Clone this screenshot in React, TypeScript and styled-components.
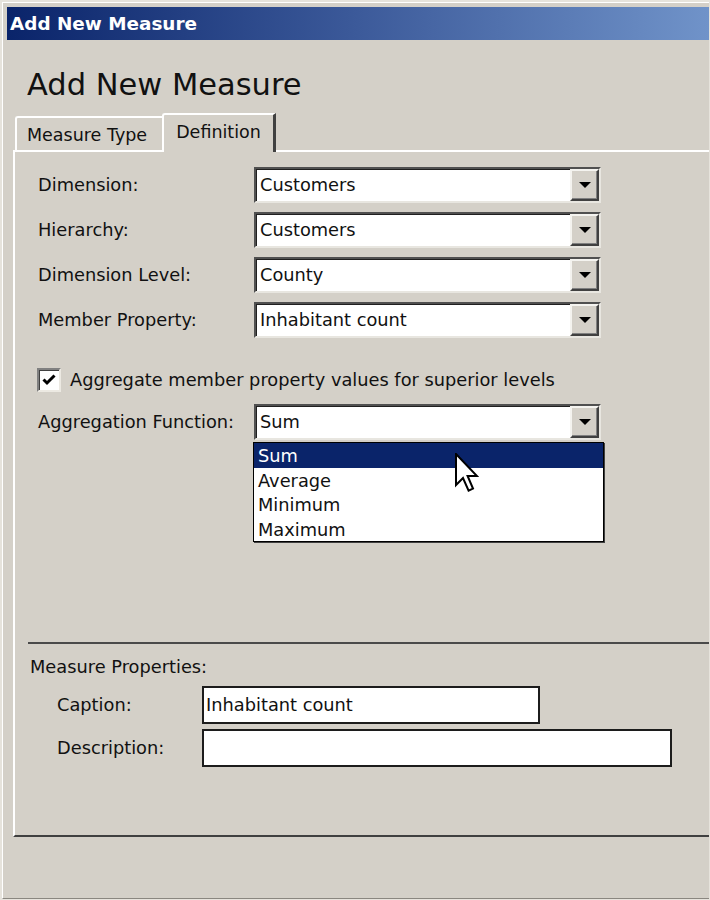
import { Fragment } from 'react';
import styled, { createGlobalStyle } from 'styled-components';

const GlobalStyle = createGlobalStyle`
  html, body {
    margin: 0;
    padding: 0;
    background: #d4d0c8;
  }

  body {
    font-family: 'DejaVu Sans', 'Liberation Sans', sans-serif;
    color: #111;
  }
`;

const Window = styled.div`
  width: 710px;
  height: 900px;
  box-sizing: border-box;
  padding: 2px 1px 0 2px;
  background: #e6e3dc;
`;

const Frame = styled.div`
  height: 897px;
  box-sizing: border-box;
  display: flex;
  flex-direction: column;
  background: #d4d0c8;
  border-top: 1px solid #fff;
  border-left: 1px solid #fff;
  border-bottom: 1px solid #8a8780;
  padding: 4px 0 0 4px;
`;

const TitleBar = styled.div`
  height: 33px;
  display: flex;
  align-items: center;
  padding-left: 3px;
  background: linear-gradient(to right, #0a246a 0%, #3c5a9a 50%, #7093c9 100%);
  color: #fff;
  font-size: 18.4px;
  font-weight: bold;
`;

const Heading = styled.h1`
  margin: 27px 0 0 20px;
  font-size: 30.5px;
  line-height: 36px;
  font-weight: normal;
`;

const TabRow = styled.div`
  display: flex;
  align-items: flex-end;
  margin: 10px 0 0 8px;
  height: 37px;
`;

const Tab = styled.div<{ $active?: boolean }>`
  position: relative;
  box-sizing: border-box;
  height: ${p => (p.$active ? 39 : 34)}px;
  padding: ${p => (p.$active ? '6px 12px 0 12px' : '6px 15px 0 10px')};
  margin-bottom: ${p => (p.$active ? -2 : 0)}px;
  background: #d4d0c8;
  border-top: 2px solid #fff;
  border-left: 2px solid #fff;
  border-right: ${p => (p.$active ? '3px solid #404040' : '0')};
  border-top-left-radius: 3px;
  font-size: 17.5px;
  line-height: 22px;
  z-index: ${p => (p.$active ? 2 : 1)};
`;

const Panel = styled.div`
  position: relative;
  height: 687px;
  box-sizing: border-box;
  margin-left: 6px;
  border-top: 2px solid #fff;
  border-left: 2px solid #fff;
  border-bottom: 2px solid #404040;
  display: flex;
  flex-direction: column;
  font-size: 17.8px;
`;

const DefinitionSection = styled.div`
  padding: 15px 0 0 23px;
`;

const FieldGrid = styled.div`
  display: grid;
  grid-template-columns: 216px 347px;
  row-gap: 9px;
  align-items: center;
`;

const Label = styled.span`
  line-height: 22px;
`;

const Combo = styled.div`
  box-sizing: border-box;
  height: 36px;
  display: flex;
  align-items: center;
  background: #fff;
  border: 2px solid;
  border-color: #505050 #e8e6e0 #e8e6e0 #505050;
  box-shadow: inset 1px 1px 0 #202020;
`;

const ComboText = styled.span`
  flex: 1;
  padding-left: 4px;
  line-height: 22px;
`;

const ComboButton = styled.div`
  box-sizing: border-box;
  width: 29px;
  height: 32px;
  display: flex;
  align-items: center;
  justify-content: center;
  background: #d4d0c8;
  border-top: 2px solid #f4f3ef;
  border-left: 2px solid #f4f3ef;
  border-right: 2px solid #404040;
  border-bottom: 2px solid #404040;
  box-shadow: inset -1px -1px 0 #808080;
`;

const Arrow = styled.span`
  width: 0;
  height: 0;
  border-left: 6px solid transparent;
  border-right: 6px solid transparent;
  border-top: 6px solid #000;
`;

const CheckRow = styled.label`
  display: flex;
  align-items: center;
  gap: 9px;
  margin: 30px 0 12px -1px;
  height: 24px;
  line-height: 22px;
`;

const CheckBox = styled.span`
  box-sizing: border-box;
  width: 24px;
  height: 24px;
  display: flex;
  align-items: center;
  justify-content: center;
  background: #fff;
  border: 2px solid;
  border-color: #808080 #ece9e2 #ece9e2 #808080;
  box-shadow: inset 1px 1px 0 #404040;
`;

const DropList = styled.ul`
  position: relative;
  list-style: none;
  box-sizing: border-box;
  width: 351px;
  margin: 2px 0 0 215px;
  padding: 0;
  background: #fff;
  border: 1px solid #000;
  box-shadow: 1px 1px 0 #404040;
`;

const DropItem = styled.li<{ $selected?: boolean }>`
  height: 24.5px;
  line-height: 25px;
  padding-left: 4px;
  background: ${p => (p.$selected ? '#0a246a' : '#fff')};
  color: ${p => (p.$selected ? '#fff' : '#111')};
`;

const Pointer = styled.svg`
  position: absolute;
  left: 201px;
  top: 10px;
`;

const PropertiesSection = styled.div`
  margin: 100px 0 0 13px;
  border-top: 2px solid #4a4a4a;
  padding: 12px 0 0 2px;
`;

const PropTitle = styled.div`
  line-height: 22px;
`;

const PropGrid = styled.div`
  display: grid;
  grid-template-columns: 145px auto;
  row-gap: 5px;
  align-items: center;
  margin: 8px 0 0 27px;
`;

const TextBox = styled.div<{ $width: number }>`
  box-sizing: border-box;
  width: ${p => p.$width}px;
  height: 38px;
  display: flex;
  align-items: center;
  padding-left: 2px;
  background: #fff;
  border: 2px solid #1c1c1c;
  line-height: 22px;
`;

const fields = [
  { label: 'Dimension:', value: 'Customers' },
  { label: 'Hierarchy:', value: 'Customers' },
  { label: 'Dimension Level:', value: 'County' },
  { label: 'Member Property:', value: 'Inhabitant count' },
];

const functions = ['Sum', 'Average', 'Minimum', 'Maximum'];

const ComboBox = ({ value }: { value: string }) => (
  <Combo>
    <ComboText>{value}</ComboText>
    <ComboButton>
      <Arrow />
    </ComboButton>
  </Combo>
);

export default function App() {
  return (
    <>
      <GlobalStyle />
      <Window>
        <Frame>
          <TitleBar>Add New Measure</TitleBar>
          <Heading>Add New Measure</Heading>

          <TabRow>
            <Tab>Measure Type</Tab>
            <Tab $active>Definition</Tab>
          </TabRow>

          <Panel>
            <DefinitionSection>
              <FieldGrid>
                {fields.map(f => (
                  <Fragment key={f.label}>
                    <Label>{f.label}</Label>
                    <ComboBox value={f.value} />
                  </Fragment>
                ))}
              </FieldGrid>

              <CheckRow>
                <CheckBox>
                  <svg width="16" height="16" viewBox="0 0 16 16">
                    <path d="M2.5 7.5 L6 11 L13.5 3.5" fill="none" stroke="#000" strokeWidth="3" />
                  </svg>
                </CheckBox>
                Aggregate member property values for superior levels
              </CheckRow>

              <FieldGrid>
                <Label>Aggregation Function:</Label>
                <ComboBox value="Sum" />
              </FieldGrid>

              <DropList>
                {functions.map((fn, i) => (
                  <DropItem key={fn} $selected={i === 0}>
                    {fn}
                  </DropItem>
                ))}
                <Pointer width="24" height="40" viewBox="0 0 12 20">
                  <path
                    d="M0.5 0.5 L0.5 16 L4 12.5 L6.8 18.8 L9 17.8 L6.3 11.5 L11 11.5 Z"
                    fill="#fff"
                    stroke="#000"
                    strokeWidth="1"
                    strokeLinejoin="miter"
                  />
                </Pointer>
              </DropList>
            </DefinitionSection>

            <PropertiesSection>
              <PropTitle>Measure Properties:</PropTitle>
              <PropGrid>
                <Label>Caption:</Label>
                <TextBox $width={338}>Inhabitant count</TextBox>
                <Label>Description:</Label>
                <TextBox $width={470} />
              </PropGrid>
            </PropertiesSection>
          </Panel>
        </Frame>
      </Window>
    </>
  );
}
